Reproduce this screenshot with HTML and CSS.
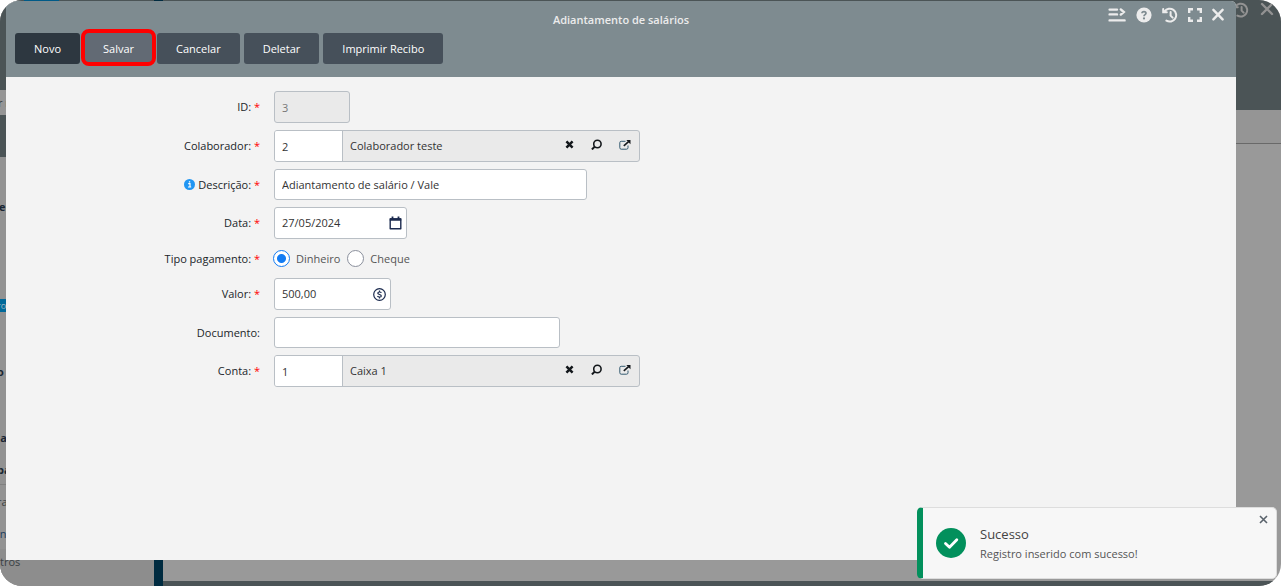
FILE: index.html
```html
<!DOCTYPE html>
<html lang="pt-BR">
<head>
<meta charset="utf-8">
<title>Adiantamento de salários</title>
<link rel="stylesheet" href="styles.css">
</head>
<body>
<div class="screen">
  <div class="backdrop" aria-hidden="true">
    <div class="side">
      <div class="side-top"><i></i></div>
      <div class="side-tab">r <b>n</b></div>
      <div class="side-band"></div>
      <div class="side-list">
        <div class="item tall strong">en</div>
        <div class="item chip-row"><span class="chip">rol</span></div>
        <div class="item head strong">o</div>
        <div class="item strong">la</div>
        <div class="item strong ruled">ba</div>
        <div class="item">ra</div>
        <div class="item blue">in</div>
        <div class="item last">tros</div>
      </div>
    </div>
    <div class="divider"></div>
    <div class="page">
      <div class="page-head">
        <svg class="ico thin" width="16" height="16" viewBox="0 0 16 16"><path d="M2.6 4.4A6.4 6.4 0 1 1 4.4 13.6M1.2 2v3.2h3.6M8.6 5v3.6l2 2"/></svg>
        <svg class="ico" width="14" height="14" viewBox="0 0 14 14"><path d="M2 2l10 10M12 2L2 12"/></svg>
      </div>
      <div class="page-sub"></div>
      <div class="page-body"></div>
      <div class="page-foot"></div>
    </div>
  </div>

  <main class="modal">
    <header class="modal-head">
      <h1 class="title">Adiantamento de salários</h1>
      <div class="tools">
        <button type="button" aria-label="Menu"><svg class="ico" width="18" height="16" viewBox="0 0 18 16"><path d="M1.6 2.6H9M1.6 7.4H9M1.6 13.4h15M12.8 2.4l3 2.6-3 2.6"/></svg></button>
        <button type="button" aria-label="Ajuda"><svg width="16" height="16" viewBox="0 0 16 16"><circle cx="8" cy="8" r="7.6" fill="#ececec"/><path d="M6 6.3C6 4 10 4 10 6.3 10 7.7 8 7.6 8 9.2" fill="none" stroke="#7e8b90" stroke-width="1.7"/><circle cx="8" cy="11.4" r="1.1" fill="#7e8b90"/></svg></button>
        <button type="button" aria-label="Histórico"><svg class="ico thin" width="16" height="16" viewBox="0 0 16 16"><path d="M2.6 4.4A6.4 6.4 0 1 1 4.4 13.6M1.2 2v3.2h3.6M8.6 5v3.6l2 2"/></svg></button>
        <button type="button" aria-label="Tela cheia"><svg class="ico" width="14" height="14" viewBox="0 0 14 14"><path d="M1.2 5V1.2H5M9 1.2h3.8V5M12.8 9v3.8H9M5 12.8H1.2V9" stroke-linecap="butt"/></svg></button>
        <button type="button" aria-label="Fechar"><svg class="ico" width="12" height="14" viewBox="0 0 12 14"><path d="M1.4 1.8l9.2 9.6M10.6 1.8l-9.2 9.6"/></svg></button>
      </div>
    </header>
    <div class="actions">
      <button type="button" class="btn dark">Novo</button>
      <button type="button" class="btn marked">Salvar</button>
      <button type="button" class="btn">Cancelar</button>
      <button type="button" class="btn">Deletar</button>
      <button type="button" class="btn">Imprimir Recibo</button>
    </div>

    <form class="form">
      <div class="row">
        <label class="label" for="id">ID: <em>*</em></label>
        <input class="box w-id" id="id" value="3" disabled>
      </div>
      <div class="row">
        <label class="label" for="colab">Colaborador: <em>*</em></label>
        <div class="lookup">
          <input class="code" id="colab" value="2"><span class="name">Colaborador teste</span>
          <button type="button" aria-label="Limpar"><svg width="9" height="9" viewBox="0 0 9 9"><path d="M1.4 1.4l6.2 6.2M7.6 1.4L1.4 7.6" stroke="#14181c" stroke-width="2.5"/></svg></button>
          <button type="button" aria-label="Buscar"><svg width="11" height="11" viewBox="0 0 11 11" fill="none" stroke="#14181c"><circle cx="6.4" cy="5" r="3.7" stroke-width="1.6"/><path d="M3.6 7.8L.9 10.4" stroke-width="2"/></svg></button>
          <button type="button" aria-label="Abrir"><svg width="12" height="10" viewBox="0 0 12 10"><path d="M6.5 1.3H2.2Q.8 1.3.8 2.7v5Q.8 9.2 2.2 9.2h5.3Q9 9.2 9 7.7V5.5" fill="none" stroke="#345a70"/><path d="M4.8 5.8L9.6 1.6" stroke="#14181c" stroke-width="1.6"/><path d="M7.3 0h4.2v4.2z" fill="#14181c"/></svg></button>
        </div>
      </div>
      <div class="row">
        <label class="label" for="desc"><svg class="info" width="11" height="11" viewBox="0 0 11 11"><circle cx="5.5" cy="5.5" r="5.5" fill="#2196f3"/><path d="M4.2 4.7h1.8v3.2M4 8h3.2M4.9 2.8h1.3" stroke="#fff" stroke-width="1.2" fill="none"/></svg>Descrição: <em>*</em></label>
        <input class="box text w-desc" id="desc" value="Adiantamento de salário / Vale">
      </div>
      <div class="row">
        <label class="label" for="data">Data: <em>*</em></label>
        <div class="box with-icon w-date">
          <input id="data" value="27/05/2024">
          <svg width="13" height="14" viewBox="0 0 13 14"><path d="M1.2 3h10.6v9.8H1.2z" fill="none" stroke="#1b2a4e" stroke-width="1.4" stroke-linejoin="round"/><path d="M.8 2.2h11.4v2.6H.8zM2.6.5h1.8v2H2.6zM8.6.5h1.8v2H8.6z" fill="#1b2a4e"/></svg>
        </div>
      </div>
      <div class="row radios" role="radiogroup" aria-labelledby="tipo-label">
        <span class="label" id="tipo-label">Tipo pagamento: <em>*</em></span>
        <div class="options">
          <label><input type="radio" name="tipo" checked>Dinheiro</label>
          <label><input type="radio" name="tipo">Cheque</label>
        </div>
      </div>
      <div class="row">
        <label class="label" for="valor">Valor: <em>*</em></label>
        <div class="box with-icon w-value">
          <input id="valor" value="500,00">
          <svg width="13" height="13" viewBox="0 0 13 13" fill="none" stroke="#1b2a4e"><circle cx="6.5" cy="6.5" r="5.8" stroke-width="1.2"/><path d="M8.4 4.7C7.8 3.7 4.8 3.7 4.8 5.2S8.3 6.4 8.3 7.9 5 9.3 4.5 8M6.5 2.6v1.6M6.5 9v1.5" stroke-width="1.2"/></svg>
        </div>
      </div>
      <div class="row">
        <label class="label" for="doc">Documento:</label>
        <input class="box text w-doc" id="doc">
      </div>
      <div class="row">
        <label class="label" for="conta">Conta: <em>*</em></label>
        <div class="lookup">
          <input class="code" id="conta" value="1"><span class="name">Caixa 1</span>
          <button type="button" aria-label="Limpar"><svg width="9" height="9" viewBox="0 0 9 9"><path d="M1.4 1.4l6.2 6.2M7.6 1.4L1.4 7.6" stroke="#14181c" stroke-width="2.5"/></svg></button>
          <button type="button" aria-label="Buscar"><svg width="11" height="11" viewBox="0 0 11 11" fill="none" stroke="#14181c"><circle cx="6.4" cy="5" r="3.7" stroke-width="1.6"/><path d="M3.6 7.8L.9 10.4" stroke-width="2"/></svg></button>
          <button type="button" aria-label="Abrir"><svg width="12" height="10" viewBox="0 0 12 10"><path d="M6.5 1.3H2.2Q.8 1.3.8 2.7v5Q.8 9.2 2.2 9.2h5.3Q9 9.2 9 7.7V5.5" fill="none" stroke="#345a70"/><path d="M4.8 5.8L9.6 1.6" stroke="#14181c" stroke-width="1.6"/><path d="M7.3 0h4.2v4.2z" fill="#14181c"/></svg></button>
        </div>
      </div>
    </form>
  </main>

  <div class="toast" role="status">
    <svg width="30" height="30" viewBox="0 0 30 30"><circle cx="15" cy="15" r="15" fill="#02905c"/><path d="M9.5 15.5l4 3.8 7.3-7.6" fill="none" stroke="#fff" stroke-width="2.8" stroke-linecap="round" stroke-linejoin="round"/></svg>
    <div class="toast-text">
      <strong>Sucesso</strong>
      <span>Registro inserido com sucesso!</span>
    </div>
    <button type="button" aria-label="Fechar aviso"><svg width="9" height="9" viewBox="0 0 9 9"><path d="M1 1l7 7M8 1L1 8" stroke="#5a636c" stroke-width="1.6"/></svg></button>
  </div>
</div>
</body>
</html>
```
FILE: styles.css
```css
* { box-sizing: border-box; }
body {
  margin: 0;
  background: #fff;
  font: 11px/16px "Open Sans", "Noto Sans", sans-serif;
  color: #212529;
}
button {
  border: 0;
  padding: 0;
  background: none;
  font: inherit;
  cursor: pointer;
}
svg { display: block; flex: none; }
input { font: inherit; color: #333; }

.screen {
  position: relative;
  display: flex;
  min-height: 100vh;
  padding: 1px 45px 26px 6px;
  border-radius: 22px;
  overflow: hidden;
}

/* dimmed application behind the dialog */
.backdrop {
  position: absolute;
  inset: 0;
  display: flex;
  background: #999;
}
.side {
  width: 154px;
  display: flex;
  flex-direction: column;
  overflow: hidden;
  background: #929292;
}
.side-top { height: 90px; background: #4b5456; }
.side-top i { display: block; width: 35px; height: 8px; margin-left: 24px; background: #005a87; }
.side-tab { height: 25px; padding-top: 5px; background: #959595; color: #333; white-space: nowrap; text-indent: -2px; }
.side-tab b { color: #8a5a30; font-weight: 400; }
.side-band { height: 42px; background: #4b5456; }
.side-list { flex: 1; display: flex; flex-direction: column; }
.item { height: 32px; flex: none; line-height: 34px; text-indent: -3px; color: #3a3f44; }
.tall { height: 100px; line-height: 100px; text-indent: -1px; }
.strong { font-weight: 700; color: #1a2633; }
.chip-row { height: 98px; padding-top: 42px; }
.chip { display: block; width: 40px; height: 13px; background: #00699a; color: #9fb6c2; font-size: 9px; line-height: 13px; }
.head { height: 66px; }
.ruled { border-bottom: 1px solid #808080; }
.blue { color: #1d3c5e; }
.last { flex: 1; line-height: 26px; text-indent: 0; background: #8d8d8d; }
.divider { width: 9px; background: #002b40; }
.page { flex: 1; display: flex; flex-direction: column; }
.page-head {
  height: 110px;
  display: flex;
  justify-content: flex-end;
  gap: 11px;
  padding: 2px 7px 0 0;
  background: #4b5456;
}
.page-head .ico { stroke: #929292; }
.page-sub { height: 34px; background: #959595; border-bottom: 1px solid #696969; }
.page-body { flex: 1; }
.page-foot { height: 5px; background: #4b5456; }

.ico { fill: none; stroke: #ececec; stroke-width: 2.4; stroke-linecap: round; }
.thin { stroke-width: 2; }

/* dialog */
.modal {
  position: relative;
  flex: 1;
  border-radius: 5px 5px 0 0;
  background: #f3f3f3;
  overflow: hidden;
}
.modal-head {
  display: grid;
  grid-template-columns: 1fr auto 1fr;
  height: 32px;
  background: #7e8b90;
}
.title { grid-column: 2; margin: 0; padding-top: 11px; font-size: 11px; line-height: 16px; font-weight: 600; color: #ececec; }
.tools { display: flex; align-items: center; justify-content: flex-end; gap: 10px; height: 28px; padding-right: 12px; }

.actions { display: flex; gap: 4px; padding: 0 9px 13px; background: #7e8b90; }
.btn {
  height: 31px;
  padding: 0 19px;
  border-radius: 3px;
  background: #46505a;
  color: #fff;
}
.btn.dark { background: #2d3740; }
.btn.marked { position: relative; background: #626a74; }
.btn.marked::after {
  content: "";
  position: absolute;
  z-index: 1;
  inset: -4px -3px -2px;
  border: 4px solid #f00;
  border-radius: 8px;
}

.form { padding: 14px 0; display: flex; flex-direction: column; gap: 7px; }
.row { display: flex; align-items: center; gap: 14px; }
.label { width: 254px; flex: none; text-align: right; }
.label em { font-style: normal; color: #f00; }
.info { display: inline-block; margin-right: 3px; vertical-align: -1px; }

.box, .lookup {
  height: 32px;
  border: 1px solid #b9bfc5;
  border-radius: 3px;
  background: #fff;
}
.box { padding: 0 7px; }
.text { height: 31px; }
.w-id { width: 76px; }
.w-desc { width: 313px; }
.w-date { width: 133px; }
.w-value { width: 117px; }
.w-doc { width: 286px; }
.box:disabled { background: #eaeaea; color: #777; }
.with-icon { display: flex; align-items: center; padding-right: 4px; }
.with-icon input { flex: 1; min-width: 0; padding: 0; border: 0; background: none; }

.lookup {
  display: flex;
  align-items: center;
  width: 366px;
  padding-right: 8px;
  background: #eaeaea;
  overflow: hidden;
}
.code { width: 68px; height: 30px; padding: 0 7px; border: 0; border-right: 1px solid #b9bfc5; background: #fff; }
.name { flex: 1; padding-left: 7px; color: #333; }
.lookup button { margin-bottom: 3px; }
.lookup button + button { margin-left: 17px; }

.radios { height: 25px; }
.options { display: flex; gap: 7px; margin-left: -1px; color: #555; }
.options label { display: flex; align-items: center; gap: 6px; }
.options input {
  appearance: none;
  width: 17px;
  height: 17px;
  margin: 0;
  border: 1px solid #8a8f9c;
  border-radius: 50%;
  background: #fff;
}
.options input:checked { border-color: #137cf3; background: radial-gradient(circle, #137cf3 4px, #fff 5px); }

.toast {
  position: absolute;
  right: 4px;
  bottom: 7px;
  display: flex;
  align-items: center;
  gap: 14px;
  width: 360px;
  height: 72px;
  padding-left: 13px;
  border: 1px solid #ddd;
  border-left: 6px solid #02905c;
  border-radius: 5px;
  background: #f7f7f7;
  color: #555;
}
.toast-text { flex: 1; display: flex; flex-direction: column; gap: 3px; }
.toast strong { font-size: 13px; line-height: 18px; font-weight: 500; color: #444; }
.toast button { align-self: flex-start; padding: 7px 8px; }
```
